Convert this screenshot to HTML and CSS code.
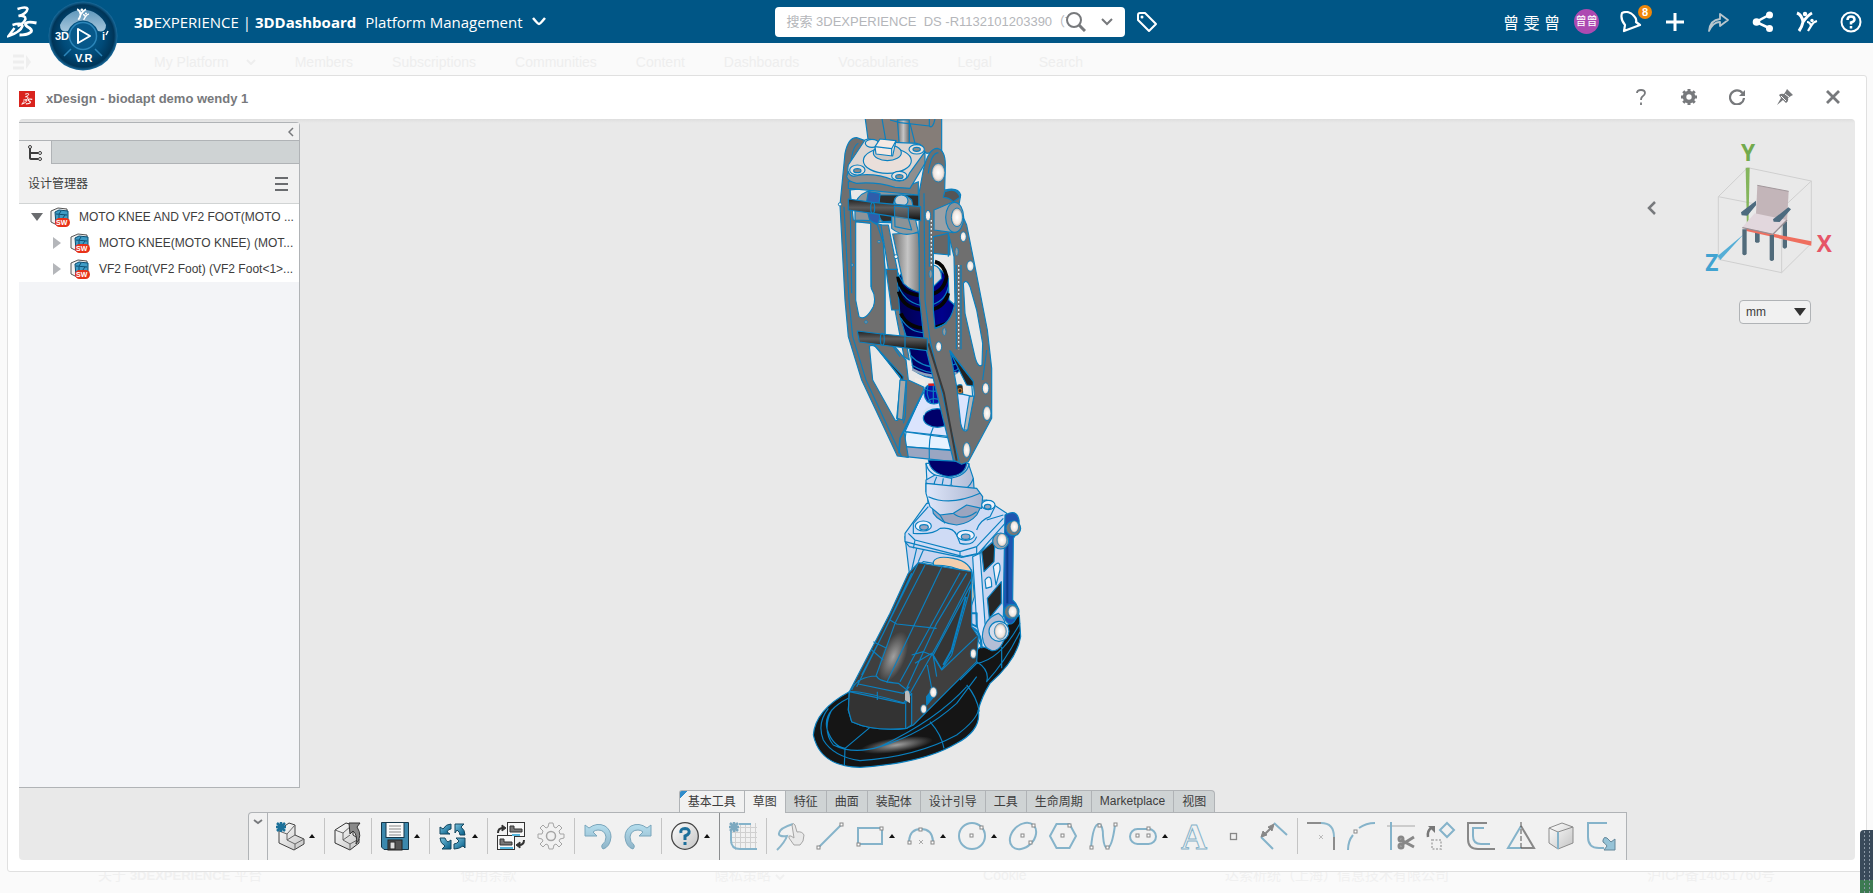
FILE: index.html
```html
<!DOCTYPE html>
<html lang="zh-CN">
<head>
    <meta charset="UTF-8">
    <meta name="viewport" content="width=device-width, initial-scale=1.0">
    <title>3DDashboard - Platform Management</title>
    <link rel="stylesheet" href="styles.css">
</head>
<body>
    <!-- 共用图形 -->
    <svg class="defs" width="0" height="0" aria-hidden="true">
        <defs>
            <linearGradient id="g-blue" x1="0" y1="0" x2="1" y2="1"><stop offset="0" stop-color="#7cc4e0"/><stop offset="1" stop-color="#005a85"/></linearGradient>
            <linearGradient id="g-pale" x1="0" y1="0" x2="0" y2="1"><stop offset="0" stop-color="#b5deee"/><stop offset="1" stop-color="#8fb4c8"/></linearGradient>
            <linearGradient id="g-part" x1="0" y1="0" x2="1" y2="1"><stop offset="0" stop-color="#fff"/><stop offset="1" stop-color="#c4c4c4"/></linearGradient>
            <radialGradient id="g-compass" cx=".5" cy=".5" r=".5"><stop offset="0" stop-color="#0b6494"/><stop offset=".6" stop-color="#004a78"/><stop offset=".9" stop-color="#003558"/><stop offset="1" stop-color="#1b6d9e"/></radialGradient>
            <linearGradient id="g-north" x1="0" y1="0" x2="0" y2="1"><stop offset="0" stop-color="#5f97bb"/><stop offset="1" stop-color="#a5c6dc"/></linearGradient>
            <linearGradient id="g-steel" x1="0" y1="0" x2="1" y2="0"><stop offset="0" stop-color="#6b6b6b"/><stop offset=".5" stop-color="#c6c6c6"/><stop offset="1" stop-color="#6a6a6a"/></linearGradient>
            <linearGradient id="g-rod" x1="0" y1="0" x2="0" y2="1"><stop offset="0" stop-color="#222"/><stop offset=".4" stop-color="#5c5c5c"/><stop offset="1" stop-color="#0c0c0c"/></linearGradient>
            <linearGradient id="g-navy" x1="0" y1="0" x2="1" y2="0"><stop offset="0" stop-color="#00004c"/><stop offset=".6" stop-color="#00008c"/><stop offset="1" stop-color="#00005c"/></linearGradient>
            <linearGradient id="g-alu" x1="0" y1="0" x2="1" y2="0"><stop offset="0" stop-color="#dfe7fa"/><stop offset="1" stop-color="#aab4cf"/></linearGradient>
            <radialGradient id="g-bolt"><stop offset="0" stop-color="#fff"/><stop offset=".7" stop-color="#efe6e0"/><stop offset="1" stop-color="#aaa09a"/></radialGradient>
            <radialGradient id="g-shine"><stop offset="0" stop-color="#a0a0a0"/><stop offset="1" stop-color="#a0a0a0" stop-opacity="0"/></radialGradient>
            <symbol id="i-ds" viewBox="0 0 30 32">
                <path d="M10 3 Q19 0 20 3 Q19 8 11 10 Q18 9 18 13 Q16 18 10 20" fill="none" stroke="currentColor" stroke-width="2.500"/>
                <path d="M5 19 Q14 16 15 20 Q13 26 1 30 L7 22" fill="none" stroke="currentColor" stroke-width="2.500"/>
                <path d="M29 17 Q19 15 18 18 Q18 20 22 22 Q26 25 22 27 Q19 29 12 29" fill="none" stroke="currentColor" stroke-width="3"/>
            </symbol>
            <symbol id="i-people" viewBox="0 0 22 22">
                <path d="M1 2 Q6 4 7 11 Q6 16 3 20 M7 11 Q12 4 16 2" fill="none" stroke="currentColor" stroke-width="3"/>
                <circle cx="9" cy="3" r="2.200" fill="currentColor"/>
                <path d="M11 11 Q14 11 15 15 L12 20 M15 15 Q17 11 21 10" fill="none" stroke="currentColor" stroke-width="2.200"/>
                <circle cx="16" cy="9.500" r="1.700" fill="currentColor"/>
            </symbol>
            <symbol id="i-part" viewBox="0 0 20 20">
                <path d="M1 4 L8 1 L17 2 V15 L9 19 L1 15Z" fill="#f2f2f2" stroke="#555"/>
                <path d="M5 5 L9 3 L18 4 V15 L6 17Z" fill="#3f9cc6" stroke="#0b4e73"/>
                <path d="M6 7 L17 8 M11 4 L9 7 M15 8 L10 15 M9 8 V15" stroke="#0b4e73"/>
                <rect x="5" y="11" width="15" height="9" rx="4.500" fill="#e8321a"/>
                <text x="6" y="18" class="sw">SW</text>
            </symbol>
        </defs>
    </svg>

    <header class="topbar">
        <div class="topbar-left">
            <a class="logo" href="#" aria-label="3DS"><svg width="31" height="32"><use href="#i-ds"/></svg></a>
            <button class="compass" aria-label="Compass">
                <svg width="70" height="70" viewBox="0 0 70 70">
                    <circle cx="35" cy="35" r="34.500" fill="url(#g-compass)"/>
                    <path d="M12 24 A25 25 0 0 1 58 24 Q58 32 50 30 A16 16 0 0 0 20 30 Q12 32 12 24Z" fill="url(#g-north)"/>
                    <circle cx="35" cy="35" r="13.500" fill="#07588a" stroke="#2c86ba" stroke-width="1.500"/>
                    <path d="M30 28 L42 35 L30 42Z" fill="none" stroke="#fff" stroke-width="2" stroke-linejoin="round"/>
                    <path d="M16 55 L23 48 M54 55 L47 48" stroke="#2c86ba" stroke-width="1.500"/>
                    <text x="7" y="39">3D</text><text x="54" y="39">i</text><path d="M60 30 l-2 4" stroke="#fff" stroke-width="1.500"/>
                    <text x="27" y="61">V.R</text>
                    <svg x="28" y="7" width="14" height="13" color="#fff"><use href="#i-people"/></svg>
                </svg>
            </button>
            <h1 class="brand"><b>3D</b>EXPERIENCE | <b>3DDashboard</b></h1>
            <button class="dash-name">Platform Management
                <svg width="14" height="9" viewBox="0 0 14 9"><path d="M1 1 Q6 7 7 7 Q8 7 13 1" fill="none" stroke="#fff" stroke-width="2.500"/></svg>
            </button>
        </div>
        <form class="search">
            <input type="search" aria-label="搜索" placeholder="搜索 3DEXPERIENCE&nbsp; DS -R1132101203390（T">
            <button type="button" aria-label="搜索"><svg width="20" height="20" viewBox="0 0 20 20" fill="none" stroke="#77797c"><circle cx="8" cy="8" r="7" stroke-width="2"/><path d="M13 13 L19 19" stroke-width="3"/></svg></button>
            <button type="button" aria-label="搜索选项"><svg width="12" height="8" viewBox="0 0 12 8"><path d="M1 1 L6 6 L11 1" fill="none" stroke="#77797c" stroke-width="2"/></svg></button>
        </form>
        <button class="tag" aria-label="标签"><svg width="22" height="22" viewBox="0 0 22 22"><path d="M2 4 Q2 2 4 2 L9 2 L20 13 L13 20 L2 9Z" fill="none" stroke="#fff" stroke-width="2" stroke-linejoin="round"/><circle cx="6" cy="6" r="1.500" fill="#fff"/></svg></button>
        <div class="user">
            <a class="user-name" href="#">曾 雯 曾</a>
            <span class="avatar">曾曾</span>
        </div>
        <nav class="actions">
            <button aria-label="通知"><svg width="22" height="22" viewBox="0 0 22 22"><path d="M2 2 Q9 -1 14 5 Q17 8 16 11 L20 14 L4 20 L5 14 Q0 8 2 2Z" fill="none" stroke="#fff" stroke-width="2.200" stroke-linejoin="round"/></svg><span class="badge">8</span></button>
            <button aria-label="添加"><svg width="18" height="18" viewBox="0 0 18 18"><path d="M9 0 V18 M0 9 H18" stroke="#fff" stroke-width="3"/></svg></button>
            <button aria-label="共享"><svg width="22" height="22" viewBox="0 0 22 22"><path d="M1 20 Q2 9 12 8 L12 3 L20 9 L12 15 L12 11 Q5 11 1 20Z" fill="none" stroke="#b9c6cd" stroke-width="1.800" stroke-linejoin="round"/></svg></button>
            <button aria-label="协作"><svg width="22" height="22" viewBox="0 0 22 22" fill="#fff"><path d="M17 4 L4 11 L17 17" stroke="#fff" stroke-width="2.500" fill="none"/><circle cx="4.500" cy="11" r="3.800"/><circle cx="17.500" cy="4" r="3.500"/><circle cx="17.500" cy="17.500" r="3.500"/></svg></button>
            <button aria-label="社区"><svg width="22" height="22"><use href="#i-people"/></svg></button>
            <button aria-label="帮助"><svg width="22" height="22" viewBox="0 0 22 22"><circle cx="11" cy="11" r="9.500" fill="none" stroke="#fff" stroke-width="2"/><path d="M7.500 9 Q7.500 5.500 11 5.500 Q14.500 5.500 14.500 8.500 Q14.500 10.500 11 11.500 V13.500 M11 15 V17.500" fill="none" stroke="#fff" stroke-width="2.500"/></svg></button>
        </nav>
    </header>

    <nav class="tabs-back">
        <svg width="18" height="16" viewBox="0 0 18 16"><path d="M0 2 H11 M0 8 H11 M0 14 H11" stroke="#eee" stroke-width="3"/><path d="M13 1 L18 8 L13 15Z" fill="#eee"/></svg>
        <a class="first" href="#">My Platform<svg width="10" height="6" viewBox="0 0 10 6"><path d="M1 1 L5 5 L9 1" fill="none" stroke="#eee" stroke-width="2"/></svg></a>
        <a href="#">Members</a>
        <a href="#">Subscriptions</a>
        <a href="#">Communities</a>
        <a href="#">Content</a>
        <a href="#">Dashboards</a>
        <a href="#">Vocabularies</a>
        <a href="#">Legal</a>
        <a class="last" href="#">Search</a>
    </nav>

    <main class="widget">
        <div class="widget-head">
            <svg class="app-icon" width="16" height="16" viewBox="0 0 16 16"><rect width="16" height="16" fill="#d9231d"/><svg x="2" y="2" width="12" height="12" color="#fff"><use href="#i-ds"/></svg></svg>
            <h2>xDesign - biodapt demo wendy 1</h2>
            <div class="widget-btns">
                <button aria-label="帮助"><svg width="16" height="16" viewBox="0 0 16 16"><path d="M4 4 Q4 1 8 1 Q12 1 12 4 Q12 6 9 8 Q8 9 8 11 M8 13.500 V16" fill="none" stroke="#77797c" stroke-width="1.800"/></svg></button>
                <button aria-label="设置"><svg width="16" height="16" viewBox="0 0 16 16"><circle cx="8" cy="8" r="4.500" fill="none" stroke="#77797c" stroke-width="3.600"/><path d="M8 0 V3 M8 13 V16 M0 8 H3 M13 8 H16 M2.300 2.300 L4 4 M12 12 L13.700 13.700 M2.300 13.700 L4 12 M12 4 L13.700 2.300" stroke="#77797c" stroke-width="3"/></svg></button>
                <button aria-label="刷新"><svg width="16" height="16" viewBox="0 0 16 16"><path d="M13.500 4 A7 7 0 1 0 15 9" fill="none" stroke="#77797c" stroke-width="2.200"/><path d="M16 1 V7 H10Z" fill="#77797c"/></svg></button>
                <button aria-label="固定"><svg width="16" height="16" viewBox="0 0 16 16"><path d="M10 0 L16 6 L14 7 L11 9 Q12 12 9 14 L6 11 L0 16 L4 9 L2 6 Q4 4 7 5 L9 2Z" fill="#77797c"/><path d="M8 5 L12 8 M4 7 L9 12" stroke="#fff"/></svg></button>
                <button aria-label="关闭"><svg width="14" height="14" viewBox="0 0 14 14"><path d="M1 1 L13 13 M13 1 L1 13" stroke="#77797c" stroke-width="2.800"/></svg></button>
            </div>
        </div>

        <div class="viewer">
            <!-- 设计管理器 -->
            <aside class="panel">
                <div class="panel-fold"><button aria-label="折叠"><svg width="6" height="10" viewBox="0 0 6 10"><path d="M5 1 L1 5 L5 9" fill="none" stroke="#77797c" stroke-width="1.500"/></svg></button></div>
                <div class="panel-tabs"><button aria-label="结构树"><svg width="14" height="16" viewBox="0 0 14 16" fill="none" stroke="#3d3d3d"><path d="M2 3 V13 Q2 14 4 14 H10 M2 8 H10" stroke-width="2"/><circle cx="2" cy="2" r="1.500"/><circle cx="12" cy="8" r="1.500"/><circle cx="12" cy="14" r="1.500"/></svg></button></div>
                <div class="panel-title"><h3>设计管理器</h3><button aria-label="菜单"><svg width="13" height="14" viewBox="0 0 13 14"><path d="M0 1 H13 M0 7 H13 M0 13 H13" stroke="#6a6c6f" stroke-width="2"/></svg></button></div>
                <ul class="tree">
                    <li><button aria-label="收起"><svg width="12" height="8" viewBox="0 0 12 8"><path d="M0 0 H12 L6 8Z" fill="#6a6c6f"/></svg></button><svg width="20" height="20"><use href="#i-part"/></svg><span>MOTO KNEE AND VF2 FOOT(MOTO ...</span></li>
                    <li class="child"><button aria-label="展开"><svg width="8" height="12" viewBox="0 0 8 12"><path d="M0 0 L8 6 L0 12Z" fill="#b4b6ba"/></svg></button><svg width="20" height="20"><use href="#i-part"/></svg><span>MOTO KNEE(MOTO KNEE) (MOT...</span></li>
                    <li class="child"><button aria-label="展开"><svg width="8" height="12" viewBox="0 0 8 12"><path d="M0 0 L8 6 L0 12Z" fill="#b4b6ba"/></svg></button><svg width="20" height="20"><use href="#i-part"/></svg><span>VF2 Foot(VF2 Foot) (VF2 Foot&lt;1&gt;...</span></li>
                </ul>
            </aside>

            <!-- 模型 -->
            <svg class="model" width="260" height="660" viewBox="21 27 780 1980" fill="none" stroke="#0a80c0" stroke-width="3.500" stroke-linejoin="round">
                <!-- 顶部接头 -->
                <path d="M195 20 H425 V125 L380 130 L340 100 L205 95Z" fill="#857d78"/>
                <path d="M292 30 H328 V110 H298Z" fill="url(#g-steel)"/>
                <path d="M245 20 L258 95 M330 40 L345 100 M270 30 L300 38 L388 48 Q398 58 405 27 M388 20 V48"/>
                <!-- 后侧支架 -->
                <path d="M165 280 Q180 245 220 240 L330 250 L345 340 L165 335Z" fill="#8d9499"/>
                <path d="M205 245 Q190 300 220 352 Q240 345 240 310 V250Z" fill="#2f5dab"/>
                <path d="M240 255 H357 V330 L250 335 Q230 330 240 255Z" fill="#2e2e2e"/>
                <path d="M400 300 H450 V435 L400 430Z" fill="#666"/>
                <path d="M213 335 L245 345 L255 480 V680 L200 640 L228 600 L230 550 L213 530Z" fill="#6f6f6f"/>
                <path d="M243 345 L265 345 L292 480 L302 600 L328 750 L312 740 L285 600Z" fill="#777"/>
                <path d="M258 478 L292 478 L300 600 L275 600Z" fill="#5d5d5d"/>
                <!-- 波纹管和活塞 -->
                <path d="M292 505 Q370 410 445 505 L447 570 L480 600 L515 745 L470 790 Q400 825 340 780 L325 700 L300 620Z" fill="url(#g-navy)"/>
                <path d="M294 500 Q300 555 370 557 Q430 555 440 500 Q430 460 405 455 M296 545 Q310 600 380 600 Q430 600 445 550 M303 610 Q320 655 385 655 Q440 650 480 615" stroke="#050505" stroke-width="11"/>
                <path d="M294 488 Q310 540 370 545 M296 530 Q320 585 380 588 Q435 580 445 530 M303 625 Q330 672 385 668 M330 735 Q370 780 440 770 Q490 760 512 725 M335 765 Q400 805 470 780 L515 735"/>
                <path d="M337 778 Q400 812 470 788" stroke="#8fa3bb" stroke-width="8"/>
                <path d="M278 372 L355 368 L368 548 Q335 545 310 520Z" fill="url(#g-steel)"/>
                <path d="M275 355 Q310 385 355 365 L350 345 L335 270 Q310 245 285 265 L275 300Z" fill="#92999c"/>
                <ellipse cx="304" cy="272" rx="20" ry="17" fill="#c8ccd0"/>
                <path d="M400 465 Q425 470 425 505 L400 530Z" fill="#d6d6d6"/>
                <!-- 铝制连接块 -->
                <path d="M365 855 L385 830 L520 860 L500 985 L315 965Z" fill="#dbe4fd"/>
                <path d="M318 966 L460 985 L460 1020 L312 1010Z" fill="#e6f2ff"/>
                <path d="M312 1010 L460 1022 V1055 L318 1040Z" fill="#9aa6c2"/>
                <ellipse cx="412" cy="924" rx="42" ry="28" fill="#00006a"/>
                <path d="M370 915 Q375 885 430 888" stroke="#d6e0f5" stroke-width="6"/>
                <path d="M400 952 Q385 980 388 1046"/>
                <path d="M372 850 Q372 822 402 822 Q432 825 430 852 Q428 880 402 882 Q375 880 372 850Z" fill="#0a12a8"/>
                <path d="M376 838 Q400 850 430 838 M385 872 Q400 860 425 872 M400 822 V882 M385 825 Q375 850 392 878"/>
                <path d="M385 824 H410" stroke="#e0201c" stroke-width="7"/>
                <circle cx="480" cy="838" r="14" fill="#3d2a18"/><circle cx="480" cy="842" r="6" stroke="#b87333"/>
                <path d="M345 803 L375 812 V825 L345 820Z M485 805 L505 815 V850 L490 850Z" fill="#f1ece8" stroke="none"/>
                <!-- 下部立管 -->
                <path d="M378 1060 L505 1060 L520 1105 L525 1175 L545 1160 L545 1230 L385 1200Z" fill="url(#g-alu)"/>
                <path d="M385 1050 L500 1055 Q500 1095 445 1100 Q390 1090 385 1050Z" fill="#00006a"/>
                <path d="M378 1060 Q385 1100 445 1105 Q500 1100 508 1060 M460 1150 Q505 1145 520 1105"/>
                <path d="M378 1110 L405 1095 L455 1105 L450 1165 L400 1160 L378 1145Z" fill="#c6d4f0"/>
                <path d="M410 1100 Q395 1130 405 1160 M430 1105 L420 1160 M378 1120 L450 1130"/>
                <!-- 左侧板 -->
                <path fill-rule="evenodd" fill="#6f6f6f" d="M120 285 L135 130 Q145 82 170 83 L195 92 L200 235 L150 240 L160 330 L212 332 L232 345 L250 400 L255 480 V675 L318 750 L325 810 L372 832 L368 850 L312 965 L325 1042 L292 1038 L185 810 L145 680 L135 570Z
                    M167 335 L212 340 L214 535 Q230 560 220 590 Q195 635 177 620 L167 570Z
                    M208 708 Q225 700 240 725 L302 805 L290 925 Q298 935 285 930 L218 810Z"/>
                <path d="M132 290 L147 570 L158 680 L198 810 L305 1040 M150 240 L155 550 M175 100 Q150 110 148 230 M255 675 L300 740 M320 810 L316 920 L310 940"/>
                <path d="M222 705 L310 800 L308 815 L300 800Z" fill="#222"/>
                <path d="M300 810 L318 812 L308 930 L292 925Z" fill="#a9a9a9"/>
                <path d="M370 845 L300 985 L297 1030" stroke-width="5"/>
                <!-- 顶部法兰 -->
                <path d="M145 235 L355 255 V215 L330 225 Q230 205 145 215Z" fill="#777"/>
                <path d="M145 165 L195 90 Q210 82 230 95 L350 100 Q375 105 373 130 L325 220 Q310 240 280 225 Q220 205 180 212 Q135 205 145 165Z" fill="#dcd6d3"/>
                <path d="M145 185 Q150 205 180 195 Q230 190 280 210 Q320 220 328 190 L375 125 L375 160 L330 235 L285 232 Q230 215 170 220 Q145 215 140 200Z" fill="#8f8f8f"/>
                <ellipse cx="262" cy="152" rx="72" ry="38" fill="#eadfda"/>
                <ellipse cx="262" cy="128" rx="42" ry="24" fill="#cfc8c4"/>
                <ellipse cx="216" cy="100" rx="20" ry="12" fill="#e8e0dc"/><ellipse cx="350" cy="118" rx="23" ry="14" fill="#e8e0dc"/>
                <ellipse cx="172" cy="180" rx="23" ry="15" fill="#e8e0dc"/><ellipse cx="298" cy="198" rx="23" ry="14" fill="#e8e0dc"/>
                <ellipse cx="350" cy="118" rx="11" ry="6" fill="#8a8a8a"/><ellipse cx="172" cy="182" rx="11" ry="6" fill="#8a8a8a"/><ellipse cx="298" cy="200" rx="11" ry="6" fill="#8a8a8a"/>
                <path d="M225 110 L240 87 L288 92 L278 138 L228 132Z" fill="#f4e9e3"/><path d="M225 110 L275 116 L288 92 M275 116 V138"/>
                <!-- 右侧板 -->
                <path fill-rule="evenodd" fill="#6f6f6f" d="M370 180 Q385 115 412 115 Q436 120 436 165 L434 240 Q475 230 482 255 L476 290 L500 345 L525 470 L562 660 L575 775 V925 L505 1055 L485 1063 L460 1050 L430 930 L372 690 L358 560 L357 250Z
                    M400 380 L445 370 L462 440 L465 575 Q455 645 405 655 L400 600Z
                    M490 520 Q500 505 510 530 L530 600 L548 700 L546 765 Q535 775 526 745 L495 610Z
                    M450 722 L520 815 L523 855 L500 962 Q488 968 482 940 L470 830Z"/>
                <path d="M385 190 Q392 130 415 128 M372 250 L375 570 L390 690 L445 930 L478 1055 M445 370 V440 M452 725 L515 820 L518 860 M405 655 L440 640 M560 720 L548 810"/>
                <path d="M385 700 L432 850 L470 1052" stroke="#3a3a3a" stroke-width="6"/>
                <path d="M450 725 L520 815 V828 L500 825Z" fill="#222"/>
                <path d="M508 860 L522 858 L503 960 L492 960Z" fill="#b5b5b5"/>
                <path d="M394 330 V470 M476 465 V718" stroke="#e8f4fb" stroke-width="4" stroke-dasharray="5 7"/>
                <path d="M388 325 V470 M469 465 V718 M483 465 V718"/>
                <path d="M402 300 L460 275 V368 L402 360Z" fill="#9ba1a6"/>
                <path d="M434 245 Q470 230 480 262 L460 275 Q445 262 430 262Z" fill="#555"/>
                <ellipse cx="464" cy="322" rx="27" ry="45" fill="#8a9299"/>
                <!-- 横杆 -->
                <path d="M145 267 L218 277 L362 290 V332 L218 310 L145 300Z" fill="url(#g-rod)"/><ellipse cx="218" cy="294" rx="6" ry="16"/>
                <path d="M283 288 L325 292 V325 L335 360 L285 350Z" fill="#7f8a90" fill-opacity=".4"/>
                <path d="M172 663 L245 672 L382 685 V722 L245 705 L178 696Z" fill="url(#g-rod)"/><ellipse cx="247" cy="688" rx="6" ry="18"/><path d="M315 680 V712"/>
                <!-- 螺栓 -->
                <g fill="url(#g-bolt)" stroke-width="2.500">
                    <ellipse cx="415" cy="188" rx="20" ry="28"/><ellipse cx="471" cy="322" rx="17" ry="28"/><ellipse cx="384" cy="317" rx="8" ry="16"/>
                    <ellipse cx="490" cy="380" rx="9" ry="15"/><ellipse cx="511" cy="468" rx="11" ry="16"/><ellipse cx="416" cy="710" rx="9" ry="15"/>
                    <ellipse cx="557" cy="835" rx="10" ry="17"/><ellipse cx="561" cy="910" rx="12" ry="22"/><ellipse cx="500" cy="1020" rx="11" ry="23"/>
                    <ellipse cx="452" cy="1142" rx="13" ry="17"/><circle cx="288" cy="440" r="6"/><circle cx="120" cy="283" r="5"/>
                </g>
                <g fill="#999" stroke-width="2.500"><ellipse cx="392" cy="492" rx="5" ry="12"/><ellipse cx="433" cy="665" rx="5" ry="11"/><ellipse cx="470" cy="425" rx="5" ry="12"/><circle cx="157" cy="465" r="4"/><circle cx="237" cy="395" r="4"/><circle cx="198" cy="636" r="4"/></g>

                <!-- 足部 -->
                <g transform="translate(-30 1140)">
                    <path d="M178 605 Q75 660 70 735 Q90 830 210 832 Q400 820 500 760 Q575 720 565 660 Q575 620 600 580 Q680 510 692 440 L688 375 L600 450 L400 600Z" fill="#151515"/>
                    <ellipse cx="320" cy="765" rx="110" ry="22" fill="url(#g-shine)" stroke="none" transform="rotate(-8 320 765)"/>
                    <path d="M115 655 Q80 700 100 750 Q130 800 210 812 Q380 800 500 735 Q560 690 565 660 M125 660 Q95 720 130 765 Q190 795 270 770 Q400 730 500 640 L560 560 M175 625 Q95 665 112 720 Q130 770 165 775 L163 828 M165 775 L240 712 M270 770 Q440 690 530 590 M420 695 Q455 735 462 775 M530 585 Q560 620 568 665 M560 515 Q600 540 590 575 Q650 510 690 425 M635 470 V535 M510 570 L560 520 Q630 510 690 400"/>
                    <!-- 踝部 -->
                    <path d="M345 140 L358 250 L400 215 L545 240 L535 400 L575 470 L640 380 L650 75 L570 190Z" fill="#c9d5f0"/>
                    <path d="M430 215 Q440 195 490 205 Q545 215 548 260 L553 320 Q545 350 535 365 L530 250 Q490 225 430 225Z" fill="#f3cfae"/>
                    <path d="M345 130 L410 40 L590 30 L650 70 L645 100 L565 190 L520 200 L345 155Z" fill="#cfdbf5"/>
                    <path d="M345 155 L358 170 L515 202 L565 192 M355 130 L375 150 L510 185 L560 170 L640 85 M375 150 L370 175 M510 185 V202 M560 170 V190 M450 115 Q430 135 370 130 L370 100 L415 50 M450 115 Q490 110 500 135 L510 160 Q550 170 560 140 M560 120 Q570 90 600 80 L615 50 M380 175 L365 240 M400 180 L385 215 M590 90 L640 75"/>
                    <path d="M425 35 L430 70 Q450 100 500 105 Q540 100 560 75 L578 40Z" fill="#9ba5bf"/>
                    <path d="M408 -20 L408 10 L420 50 L450 75 L490 70 L530 45 L575 55 L578 20 L560 -5Z" fill="url(#g-alu)"/>
                    <path d="M415 20 Q480 50 570 10 M450 75 L465 100 M490 70 Q520 95 560 65"/>
                    <g fill="#eef3fd"><ellipse cx="400" cy="108" rx="24" ry="15"/><ellipse cx="527" cy="136" rx="26" ry="15"/><ellipse cx="595" cy="45" rx="20" ry="14"/></g>
                    <g fill="#9ba7c0"><ellipse cx="402" cy="112" rx="13" ry="8"/><ellipse cx="527" cy="140" rx="13" ry="8"/><ellipse cx="593" cy="50" rx="10" ry="7"/></g>
                    <path d="M575 185 L615 150 L612 215 L582 245Z M592 325 L634 275 V340 L598 385Z" fill="#262626"/>
                    <path d="M548 200 L570 190 L585 400 L612 480 L575 470 L560 400Z" fill="#dbe4fa"/>
                    <path d="M585 270 Q605 245 605 290 L588 295Z M610 230 Q632 205 630 240 L618 285Z" fill="#edf1fa"/>
                    <path d="M645 75 Q680 55 687 90 Q690 120 670 145 L668 330 Q690 350 683 375 Q665 420 645 390 L640 340Z" fill="#1f55b0"/>
                    <path d="M652 140 V340" stroke="#0b3d88" stroke-width="6"/>
                    <circle cx="670" cy="115" r="22" fill="#777"/><circle cx="665" cy="365" r="22" fill="#777"/><circle cx="632" cy="153" r="24" fill="#9aa0aa"/>
                    <path d="M577 440 Q580 385 625 370 Q650 385 648 430 Q635 485 605 482 Q580 475 577 440Z" fill="#b4bed6"/><circle cx="627" cy="424" r="30" fill="#d6ddeb"/>
                    <g fill="url(#g-bolt)" stroke-width="2"><ellipse cx="673" cy="110" rx="13" ry="18"/><ellipse cx="636" cy="150" rx="15" ry="20"/><ellipse cx="668" cy="365" rx="14" ry="18"/><ellipse cx="631" cy="424" rx="18" ry="24"/></g>
                    <path d="M535 370 L560 370 V410 L540 400 M540 410 Q575 420 575 475" stroke-width="6"/>
                    <!-- 外壳 -->
                    <path d="M385 218 L545 245 V410 L565 440 L560 515 L370 705 L350 715 Q250 725 185 695 L175 660 L178 605 L300 370 L355 250Z" fill="#3f3f3f"/>
                    <path d="M178 605 L340 640 L365 610 V705 L350 715 Q250 725 185 695 L175 660Z" fill="#333"/>
                    <ellipse cx="310" cy="500" rx="36" ry="80" fill="url(#g-shine)" stroke="none" transform="rotate(22 310 500)"/>
                    <path d="M178 605 Q210 600 345 640 M185 600 Q200 560 260 558 M205 570 L205 582 L340 610 L358 590 M260 558 Q265 575 325 580 L358 605 L347 640 V715 M262 605 V630 M455 232 L290 578 M405 225 L315 400 L258 558 M385 218 L200 590 M365 250 L280 430 L215 555 M510 248 L410 430 L330 575 M530 250 L440 400 L350 595 M545 265 L450 450 L360 610 M300 390 L320 402 L440 415 M245 480 L280 510 M250 455 L290 475 M375 520 L425 490 L455 540 L560 440 M365 495 L400 485 L425 495 M412 525 L425 595 M430 500 L440 560"/>
                    <path d="M545 280 L430 495 L455 538 L485 495Z" fill="#353535"/>
                    <path d="M528 320 L485 480 L460 525" stroke-width="6"/>
                    <path d="M345 605 Q362 590 360 640 L345 630Z" fill="#bdbdbd" stroke="none"/>
                    <path d="M410 620 L430 595 L440 610 L410 645Z" fill="#0a80c0"/>
                    <g fill="url(#g-bolt)" stroke-width="2"><ellipse cx="430" cy="607" rx="11" ry="16"/><ellipse cx="401" cy="657" rx="9" ry="13"/><ellipse cx="550" cy="491" rx="9" ry="14"/></g>
                </g>
            </svg>

            <div class="side">
                <button class="side-fold" aria-label="展开"><svg width="9" height="14" viewBox="0 0 9 14"><path d="M8 1 L2 7 L8 13" fill="none" stroke="#77797c" stroke-width="2.500"/></svg></button>
                <div class="orient">
                    <svg width="130" height="137" viewBox="310 60 390 411">
                        <path d="M444 143 L635 183 L545 267 L356 230Z M356 230 V418 L546 458 V267 M635 183 V370 L546 458" fill="none" stroke="#cfcfcf" stroke-width="3"/>
                        <path d="M438 143 H450 L446 330 H442Z" fill="#84b55c"/>
                        <path d="M466 330 H480 V365 Q473 372 466 365Z M549 300 H562 V382 Q555 390 549 382Z" fill="#516b7b"/>
                        <path d="M440 325 L635 364 V377 L440 333Z" fill="#ef6f5f"/>
                        <path d="M432 343 L354 408 L362 420Z" fill="#55aed6"/>
                        <path d="M473 196 L567 214 L562 305 L469 283Z" fill="#c3b5b9"/><path d="M473 196 L567 214" stroke="#a2979b" stroke-width="3"/>
                        <path d="M428 322 L465 280 L562 300 L520 342Z" fill="#e2d7dd"/><path d="M428 323 L520 343 L562 300" fill="none" stroke="#998f95" stroke-width="4"/>
                        <path d="M428 328 H441 V402 Q434 410 428 402Z M510 345 H523 V419 Q516 427 510 419Z" fill="#516b7b"/>
                        <path d="M424 277 L469 242 V256 L443 287 L426 286Z M520 298 L566 262 L574 268 L540 306 L522 305Z" fill="#4d6b7f"/>
                        <text x="424" y="123" fill="#72aa4d">Y</text><text x="651" y="395" fill="#e65567">X</text><text x="317" y="452" fill="#41a3d1">Z</text>
                    </svg>
                    <label class="units"><select aria-label="单位"><option>mm</option><option>cm</option></select><svg width="12" height="8" viewBox="0 0 12 8"><path d="M0 0 H12 L6 8Z" fill="#333"/></svg></label>
                </div>
            </div>

            <!-- 工具条 -->
            <div class="action-bar">
                <div class="bar-tabs">
                    <button class="pinned">基本工具</button><button class="active">草图</button><button>特征</button><button>曲面</button><button>装配体</button><button>设计引导</button><button>工具</button><button>生命周期</button><button>Marketplace</button><button>视图</button>
                </div>
                <div class="bar">
                    <button class="bar-fold" aria-label="收起"><svg width="10" height="6" viewBox="0 0 10 6"><path d="M1 1 L5 4 L9 1" fill="none" stroke="#77797c" stroke-width="1.800"/></svg></button>
                    <div class="tools">
                        <button class="tool" aria-label="新建"><svg viewBox="0 0 28 28"><path d="M3 8 L13 1 L19 3 V13 L28 17 V22 L18 28 L3 21Z" fill="url(#g-part)" stroke="#444"/><path d="M3 9 L11 12 V18 L19 22 V27 M11 12 L19 3 M11 18 L19 13 M19 22 L28 17" fill="none" stroke="#666"/><path d="M5 0 V10 M0 5 H10 M1 1 L9 9 M9 1 L1 9" stroke="#1b7099" stroke-width="2.500"/></svg></button><button class="drop" aria-label="更多"></button>
                        <i class="sep"></i>
                        <button class="tool" aria-label="打开"><svg viewBox="0 0 28 28"><path d="M1 8 L12 1 L19 3 V13 L25 17 V21 L16 28 L1 21Z" fill="url(#g-part)" stroke="#333"/><path d="M1 8 L9 11 V18 L16 22 V28 M9 11 L17 4 M9 18 L16 13 M16 22 L25 17" fill="none" stroke="#666"/><path d="M15 1 H26 L23 5 Q29 14 22 22 Q24 13 19 9 L16 12Z" fill="#8a8a8a" stroke="#333"/></svg></button>
                        <i class="sep"></i>
                        <button class="tool" aria-label="保存"><svg viewBox="0 0 28 28"><path d="M.5 .5 H27.500 V27.500 H3 L.5 25Z" fill="#3b88ad" stroke="#16374a"/><rect x="5" y=".5" width="18" height="15" fill="#fafafa" stroke="#16374a"/><path d="M8 4 H20 M8 7 H20 M8 10 H20 M8 13 H20" stroke="#888"/><rect x="7" y="18" width="14" height="10" fill="#555" stroke="#222"/><rect x="9" y="20" width="5" height="7" fill="#ddd" stroke="#222"/></svg></button><button class="drop" aria-label="更多"></button>
                        <i class="sep"></i>
                        <button class="tool" aria-label="更新"><svg viewBox="0 0 28 28" fill="url(#g-blue)" stroke="#14475f"><path d="M1 5 L4 7 Q7 2 12 2 V7 Q9 7 8 10 L11 12 H1Z"/><path d="M16 2 H25 L22 5 Q26 8 26 13 H21 Q21 10 18 8 L16 11Z"/><path d="M26 16 V26 L24 24 Q20 27 15 27 V22 Q18 22 20 19 L17 16Z"/><path d="M1 16 H6 Q7 19 9 20 L12 18 V27 H3 L6 24 Q1 21 1 16Z"/></svg></button><button class="drop" aria-label="更多"></button>
                        <i class="sep"></i>
                        <button class="tool" aria-label="替换"><svg viewBox="0 0 28 28" fill="none" stroke="#333"><rect x="10.500" y=".5" width="17" height="14" fill="#f8f8f8"/><rect x=".5" y="13.500" width="17" height="14" fill="#f8f8f8"/><path d="M13 4 H17 V7 H25 V10 H13Z M3 17 H7 V20 H15 V23 H3Z" fill="#777"/><path d="M15 12 H23 V14 H15Z M3 25 H16 V27 H3Z" fill="#55b5dc" stroke="none"/><path d="M1 11 Q1 6 6 6 M27 18 Q27 23 22 23" stroke-width="2"/><path d="M5 3 L9 6 L5 9Z M23 20 L19 23 L23 26Z" fill="#333"/></svg></button>
                        <button class="tool" aria-label="选项"><svg viewBox="0 0 28 28" fill="none" stroke="#a5a5a5"><path d="M12 1 H16 L17 5 L19 6 L22 3 L25 6 L22 9 L23 12 L27 12 V16 L23 17 L22 19 L25 22 L22 25 L19 22 L17 23 L16 27 H12 L11 23 L9 22 L6 25 L3 22 L6 19 L5 17 L1 16 V12 L5 12 L6 9 L3 6 L6 3 L9 6 L11 5Z"/><circle cx="14" cy="14" r="4.500" stroke-width="1.500"/></svg></button>
                        <i class="sep"></i>
                        <button class="tool" aria-label="撤消"><svg viewBox="0 0 28 28"><path d="M1 3 L5 6 Q13 0 21 4 Q27 8 27 15 Q26 25 19 27 Q17 25 18 23 Q22 20 22 15 Q21 8 14 8 Q11 8 9 10 L13 14 H1Z" fill="url(#g-pale)" stroke="#7aa6bc"/></svg></button>
                        <button class="tool" aria-label="重做"><svg viewBox="0 0 28 28"><path d="M27 3 L23 6 Q15 0 7 4 Q1 8 1 15 Q2 25 9 27 Q11 25 10 23 Q6 20 6 15 Q7 8 14 8 Q17 8 19 10 L15 14 H27Z" fill="url(#g-pale)" stroke="#7aa6bc"/></svg></button>
                        <i class="sep"></i>
                        <button class="tool" aria-label="帮助"><svg viewBox="0 0 28 28"><circle cx="14" cy="14" r="13.300" fill="url(#g-part)" stroke="#444" stroke-width="1.300"/><path d="M10 11 Q9 6.500 14 6.500 Q19 7 18 11 Q17 13 14 14 V18 M14 20 V23" fill="none" stroke="#1d6f9b" stroke-width="3"/></svg></button><button class="drop" aria-label="更多"></button>
                        <i class="sep strong"></i>
                        <button class="tool" aria-label="草图"><svg viewBox="0 0 28 28" fill="none"><path d="M1 5.500 H28 M1 10.500 H28 M1 15.500 H28 M1 20.500 H28 M6.500 1 V28 M11.500 1 V28 M16.500 1 V28 M21.500 1 V28 M26.500 1 V28" stroke="#d0d0d0"/><path d="M10 2 H22 M2 9 V18 Q2 27 11 27 H28" stroke="#85b3ca" stroke-width="2"/><path d="M5 0 V10 M0 5 H10 M1 1 L9 9 M9 1 L1 9" stroke="#7da9c0" stroke-width="2.500"/></svg></button>
                        <i class="sep"></i>
                        <button class="tool" aria-label="手绘"><svg viewBox="0 0 28 28"><path d="M17 2 Q4 6 3 11 Q2 15 11 14 Q9 20 1 28" fill="none" stroke="#8ab5ca" stroke-width="2"/><path d="M16 3 Q17 0 19 3 L21 10 Q26 9 28 13 L27 19 L24 23 H18 L13 16 Q12 13 15 14 L18 16Z" fill="#e9e9e9" stroke="#a5a5a5"/></svg></button>
                        <button class="tool" aria-label="直线"><svg viewBox="0 0 28 28"><path d="M3 25 L25 3" stroke="#85b3ca" stroke-width="2"/><g class="pt"><rect x="1" y="24" width="3" height="3"/><rect x="24" y="1" width="3" height="3"/></g></svg></button>
                        <button class="tool" aria-label="矩形"><svg viewBox="0 0 28 28"><rect x="2" y="6" width="24" height="16" fill="none" stroke="#85b3ca" stroke-width="2"/><g class="pt"><rect x="1" y="21" width="3" height="3"/><rect x="24" y="5" width="3" height="3"/></g></svg></button><button class="drop" aria-label="更多"></button>
                        <button class="tool" aria-label="圆弧"><svg viewBox="0 0 28 28"><path d="M2 19 Q3 7 14 7 Q25 7 26 19" fill="none" stroke="#85b3ca" stroke-width="2"/><path d="M12 18 L16 22 M16 18 L12 22" stroke="#aaa"/><g class="pt"><rect x="1" y="19" width="3" height="3"/><rect x="12" y="6" width="3" height="3"/><rect x="24" y="19" width="3" height="3"/></g></svg></button><button class="drop" aria-label="更多"></button>
                        <button class="tool" aria-label="圆"><svg viewBox="0 0 28 28"><circle cx="14" cy="14" r="13" fill="none" stroke="#85b3ca" stroke-width="2"/><g class="pt"><rect x="12" y="12" width="3" height="3"/><rect x="22" y="4" width="3" height="3"/></g></svg></button><button class="drop" aria-label="更多"></button>
                        <button class="tool" aria-label="椭圆"><svg viewBox="0 0 28 28"><ellipse cx="14" cy="14" rx="15" ry="11" transform="rotate(-45 14 14)" fill="none" stroke="#85b3ca" stroke-width="2"/><g class="pt"><rect x="12" y="12" width="3" height="3"/><rect x="23" y="2" width="3" height="3"/><rect x="20" y="19" width="3" height="3"/></g></svg></button>
                        <button class="tool" aria-label="多边形"><svg viewBox="0 0 28 28"><path d="M7.500 2 H20.500 L27 14 L20.500 26 H7.500 L1 14Z" fill="none" stroke="#85b3ca" stroke-width="2"/><g class="pt"><rect x="12" y="12" width="3" height="3"/><rect x="19" y="2" width="3" height="3"/></g></svg></button>
                        <button class="tool" aria-label="样条曲线"><svg viewBox="0 0 28 28"><path d="M2 26 Q4 2 10 2 Q14 3 14 14 Q15 26 18 26 Q23 26 26 3" fill="none" stroke="#85b3ca" stroke-width="2"/><g class="pt"><rect x="1" y="24" width="3" height="3"/><rect x="9" y="2" width="3" height="3"/><rect x="17" y="24" width="3" height="3"/><rect x="25" y="1" width="3" height="3"/></g></svg></button>
                        <button class="tool" aria-label="槽口"><svg viewBox="0 0 28 28"><rect x="1" y="7" width="26" height="15" rx="7.500" fill="none" stroke="#85b3ca" stroke-width="2"/><g class="pt"><rect x="7" y="12" width="3" height="3"/><rect x="18" y="12" width="3" height="3"/><rect x="18" y="5" width="3" height="3"/></g></svg></button><button class="drop" aria-label="更多"></button>
                        <button class="tool letter" aria-label="文字"><svg viewBox="0 0 28 28"><text x="1" y="27">A</text></svg></button>
                        <button class="tool" aria-label="点"><svg viewBox="0 0 28 28"><rect x="10.500" y="11.500" width="6" height="6" fill="none" stroke="#888" stroke-width="1.300"/></svg></button>
                        <button class="tool" aria-label="智能尺寸"><svg viewBox="0 0 28 28"><path d="M1 15 L13 27 M14 1 L27 13" stroke="#85b3ca" stroke-width="2"/><path d="M3 14 L13 4" stroke="#888" stroke-width="2"/><path d="M1 15 L3 9 L7 13Z M14 2 L8 5 L12 9Z" fill="#888" stroke="#888"/></svg></button>
                        <i class="sep"></i>
                        <button class="tool" aria-label="圆角"><svg viewBox="0 0 28 28" fill="none"><path d="M0 1 H14 M27 15 V28" stroke="#8c8c8c" stroke-width="2"/><path d="M14 1 Q27 1 27 15" stroke="#8bb8cd" stroke-width="2"/><path d="M12 13 L16 17 M16 13 L12 17" stroke="#bbb"/></svg></button>
                        <button class="tool" aria-label="分割"><svg viewBox="0 0 28 28" fill="none"><path d="M1 28 Q1 19 6 13 M12 6 Q19 1 28 1" stroke="#85b3ca" stroke-width="2"/><g class="pt"><rect x="7" y="8" width="3" height="3"/></g></svg></button>
                        <button class="tool" aria-label="剪裁"><svg viewBox="0 0 28 28" fill="none"><path d="M0 4 H28" stroke="#ccc" stroke-width="2"/><path d="M4 0 V28" stroke="#85b3ca" stroke-width="2"/><g stroke="#888" stroke-width="3"><path d="M14 18 L27 25 M14 23 L27 15"/><circle cx="14" cy="17" r="2"/><circle cx="14" cy="24" r="2"/></g></svg></button>
                        <button class="tool" aria-label="移动"><svg viewBox="0 0 28 28" fill="none"><path d="M20 1 L27 8 L20 15 L13 8Z" stroke="#85b3ca" stroke-width="2"/><path d="M1 15 Q0 9 4 6" stroke="#777" stroke-width="2.500"/><path d="M1 4 H8 V11Z" fill="#777"/><rect x="5" y="18" width="9" height="9" stroke="#bbb" stroke-width="2" stroke-dasharray="2 1.500"/></svg></button>
                        <button class="tool" aria-label="等距"><svg viewBox="0 0 28 28" fill="none"><path d="M20 1 H1 V17 Q1 27 11 27 H28" stroke="#888" stroke-width="2"/><path d="M17 6 H6 V14 Q6 22 14 22 H23" stroke="#85b3ca" stroke-width="2"/></svg></button>
                        <button class="tool" aria-label="镜像"><svg viewBox="0 0 28 28" fill="none"><path d="M14 4 L1 26 H14" stroke="#85b3ca" stroke-width="2"/><path d="M14 4 L27 26 H14" stroke="#888" stroke-width="2"/><path d="M14 0 V28" stroke="#555" stroke-dasharray="5 2"/></svg></button>
                        <button class="tool" aria-label="实体"><svg viewBox="0 0 28 28"><path d="M2 6 L15 1 L26 5 V21 L11 27 L2 21Z" fill="url(#g-part)" stroke="#8c8c8c"/><path d="M2 6 L11 10 L26 5" fill="none" stroke="#8c8c8c"/><path d="M11 10 V27" stroke="#85b3ca" stroke-width="2"/></svg></button>
                        <button class="tool" aria-label="转换"><svg viewBox="0 0 28 28"><path d="M20 1 H1 V15 Q1 26 12 26 H17" fill="none" stroke="#85b3ca" stroke-width="2"/><path d="M16 18 Q17 14 20 16 L24 20 L28 17 V28 H17 L20 24 Q18 21 16 20Z" fill="#96c3d7" stroke="#64879a"/></svg></button>
                    </div>
                </div>
            </div>
        </div>
    </main>

    <footer class="foot">
        <a href="#">关于 <b>3DEXPERIENCE</b> 平台</a>
        <a href="#">使用条款</a>
        <a href="#">隐私策略 <svg width="10" height="6" viewBox="0 0 10 6"><path d="M1 1 L5 5 L9 1" fill="none" stroke="#f0f0f0" stroke-width="2"/></svg></a>
        <a href="#">Cookie</a>
        <span>达索析统（上海）信息技术有限公司</span>
        <span>沪ICP备14051760号</span>
    </footer>
    <div class="grip"></div>
</body>
</html>
```
FILE: styles.css
```css
:root {
    --header: #005686;
    --line: #b0b3b6;
    --icon: #77797c;
    --bar-bg: #f1f1f1;
}

* {
    box-sizing: border-box;
    margin: 0;
    padding: 0;
}

body {
    display: flex;
    flex-direction: column;
    height: 100vh;
    overflow: hidden;
    background: #fafafa;
    color: #3d3d3d;
    font-family: "Liberation Sans", "Noto Sans CJK SC", sans-serif;
    font-size: 12px;
}

button {
    display: flex;
    align-items: center;
    justify-content: center;
    background: none;
    border: none;
    color: inherit;
    font: inherit;
    cursor: pointer;
}

a {
    color: inherit;
    text-decoration: none;
}

svg {
    display: block;
    flex: none;
}

.defs {
    position: absolute;
}

.sw {
    font: bold 7px "Liberation Sans", sans-serif;
    fill: #fff;
}

/* 顶栏 */
.topbar {
    display: flex;
    align-items: center;
    flex: none;
    height: 43px;
    background: var(--header);
    color: #fff;
    position: relative;
    z-index: 2;
}

.topbar-left {
    display: flex;
    align-items: center;
    flex: none;
    width: 41.4%;
    height: 43px;
    padding-left: 7px;
}

.logo {
    width: 31px;
    color: #fff;
}

.compass {
    width: 70px;
    height: 70px;
    margin: 28px 16px 0 10px;
    z-index: 3;
}

.compass text {
    font: bold 11px "Liberation Sans", sans-serif;
    fill: #fff;
}

.brand,
.dash-name {
    font: 15px "Open Sans", sans-serif;
    white-space: nowrap;
}

.dash-name {
    gap: 9px;
    margin-left: 9px;
}

.search {
    display: flex;
    align-items: center;
    width: 350px;
    height: 30px;
    padding: 0 12px 0 11px;
    background: #fff;
    border-radius: 4px;
}

.search input {
    flex: 1;
    min-width: 0;
    margin-right: -14px;
    border: none;
    outline: none;
    background: none;
    font: 13px "Liberation Sans", "Noto Sans CJK SC", sans-serif;
}

.search input::placeholder {
    color: #b4b6ba;
}

.search button {
    z-index: 1;
}

.search button + button {
    margin-left: 15px;
}

.tag {
    margin-left: 11px;
}

.user {
    display: flex;
    align-items: center;
    gap: 14px;
    margin-left: auto;
}

.user-name {
    font: 16px "Liberation Sans", "Noto Sans CJK SC", sans-serif;
    white-space: nowrap;
}

.avatar {
    width: 25px;
    height: 25px;
    border-radius: 50%;
    background: #ad4ab1;
    font-size: 11px;
    line-height: 25px;
    text-align: center;
}

.actions {
    display: flex;
    padding-left: 10px;
}

.actions button {
    width: 44px;
    height: 43px;
    position: relative;
}

.badge {
    position: absolute;
    top: 5px;
    right: 1px;
    width: 14px;
    height: 14px;
    border-radius: 50%;
    background: #f0870a;
    font-size: 11px;
    font-weight: bold;
    line-height: 14px;
}

/* 仪表板选项卡 */
.tabs-back {
    display: flex;
    align-items: center;
    flex: none;
    gap: 39px;
    height: 32px;
    padding: 6px 0 0 13px;
    color: #eeeeee;
    font-size: 14px;
    white-space: nowrap;
}

.tabs-back .first {
    display: flex;
    align-items: center;
    gap: 17px;
    margin-left: 84px;
}

.tabs-back .last {
    margin-left: 8px;
}

/* 应用窗口 */
.widget {
    display: flex;
    flex: 1;
    flex-direction: column;
    min-height: 0;
    margin: 0 6px 0 7px;
    padding: 0 11px 11px;
    border: 1px solid #e0e0e0;
    border-radius: 3px;
    background: #fff;
    z-index: 1;
}

.widget-head {
    display: flex;
    align-items: center;
    flex: none;
    gap: 11px;
    height: 43px;
    padding-top: 2px;
}

.widget-head h2 {
    color: var(--icon);
    font-size: 13px;
}

.widget-btns {
    display: flex;
    margin: 0 -2px 4px auto;
}

.widget-btns button {
    width: 48px;
    height: 20px;
}

.viewer {
    display: grid;
    flex: 1;
    grid-template-columns: 1fr auto 1fr;
    grid-template-rows: 1fr auto;
    min-height: 0;
    overflow: hidden;
    border-radius: 4px;
    background: linear-gradient(#dedede, #e9e9e9 4px);
}

.model {
    grid-column: 2;
}

.panel {
    width: 281px;
    margin: 3px 0 2px;
    border: 1px solid var(--line);
    border-left: none;
    border-radius: 0 4px 0 0;
    background: #f3f4f7;
}

.panel-fold {
    display: flex;
    justify-content: flex-end;
    height: 18px;
    padding-right: 5px;
    background: var(--bar-bg);
    border-bottom: 1px solid var(--line);
}

.panel-tabs {
    height: 23px;
    background: #cfd3d4;
    border-bottom: 1px solid var(--line);
}

.panel-tabs button {
    width: 33px;
    height: 23px;
    background: var(--bar-bg);
    border-right: 1px solid var(--line);
}

.panel-title {
    display: flex;
    align-items: center;
    justify-content: space-between;
    height: 40px;
    padding: 0 11px 0 9px;
    background: var(--bar-bg);
    border-bottom: 1px solid #d1d4d4;
}

.panel-title h3 {
    padding-bottom: 2px;
    font-size: 12px;
    font-weight: normal;
}

.tree {
    list-style: none;
    background: #fff;
}

.tree li {
    display: flex;
    align-items: center;
    height: 26px;
    padding-left: 12px;
    white-space: nowrap;
}

.tree .child {
    padding-left: 32px;
}

.tree button {
    width: 12px;
    margin-right: 7px;
}

.tree span {
    margin-left: 9px;
}

.side {
    display: flex;
    align-items: flex-start;
    justify-content: flex-end;
    gap: 47px;
    padding: 21px 22px 0 0;
}

.side-fold {
    margin-top: 61px;
}

.orient {
    display: flex;
    flex-direction: column;
    align-items: flex-end;
    gap: 23px;
}

.orient > svg {
    overflow: visible;
}

.orient text {
    font: bold 68px "Open Sans", sans-serif;
}

.units {
    position: relative;
    margin-right: 22px;
}

.units select {
    display: block;
    width: 72px;
    height: 24px;
    padding-left: 6px;
    appearance: none;
    border: 1px solid var(--line);
    border-radius: 4px;
    background: #f1f1f1;
    color: #3d3d3d;
    font: 12px "Liberation Sans", sans-serif;
}

.units svg {
    position: absolute;
    top: 8px;
    right: 5px;
    pointer-events: none;
}

/* 工具条 */
.action-bar {
    grid-column: 1 / -1;
    grid-row: 2;
    justify-self: center;
}

.bar-tabs {
    display: flex;
    justify-content: center;
    padding-left: 20px;
}

.bar-tabs button {
    height: 22px;
    padding: 0 8px 2px;
    border-top: 1px solid var(--line);
    border-right: 1px solid var(--line);
    background: #cfd3d4;
    white-space: nowrap;
}

.bar-tabs .pinned {
    border-left: 1px solid var(--line);
    border-radius: 3px 0 0 0;
    background: linear-gradient(135deg, #2f8ccb 5px, var(--bar-bg) 5px);
}

.bar-tabs button:last-child {
    border-radius: 0 4px 0 0;
}

.bar-tabs .active {
    height: 23px;
    margin-bottom: -1px;
    padding-bottom: 3px;
    background: var(--bar-bg);
    z-index: 1;
}

.bar {
    display: flex;
    height: 48px;
    border: 1px solid var(--line);
    border-bottom: none;
    border-radius: 4px 0 0 0;
    background: var(--bar-bg);
}

.bar-fold {
    align-items: flex-start;
    width: 19px;
    padding-top: 6px;
    border-right: 1px solid var(--line);
}

.tools {
    display: flex;
    align-items: center;
    padding: 0 5px 2px 2px;
}

.tool {
    width: 28px;
    height: 28px;
    margin: 0 6px;
}

.tool svg {
    width: 28px;
    height: 28px;
    overflow: visible;
}

.drop {
    width: 17px;
    height: 28px;
    margin-left: -6px;
}

.drop::before {
    content: "";
    border: 3px solid transparent;
    border-top: none;
    border-bottom: 4px solid #111;
}

.sep {
    width: 1px;
    height: 36px;
    margin: 0 3px;
    background: #c4c4c4;
}

.sep.strong {
    height: 47px;
    margin-bottom: -2px;
    background: #8c8e90;
}

.pt {
    fill: #fff;
    stroke: #888;
}

.letter text {
    font: bold 36px "Liberation Serif", serif;
    fill: #f1f1f1;
    stroke: #85b3ca;
}

/* 页脚 */
.foot {
    display: flex;
    justify-content: space-between;
    flex: none;
    height: 27px;
    margin-top: -6px;
    padding: 0 98px;
    color: #f0f0f0;
    font-size: 14px;
    line-height: 18px;
    white-space: nowrap;
}

.foot b {
    font-size: 13px;
}

.foot svg {
    display: inline-block;
}

.grip {
    position: fixed;
    right: 0;
    bottom: 0;
    width: 13px;
    height: 63px;
    border-radius: 4px 0 0 0;
    background: radial-gradient(#8d99a6 1px, transparent 1px) 2px 8px / 5px 4px, linear-gradient(#3a4a5a 80%, #3d7a52 80%);
    z-index: 4;
}
```
